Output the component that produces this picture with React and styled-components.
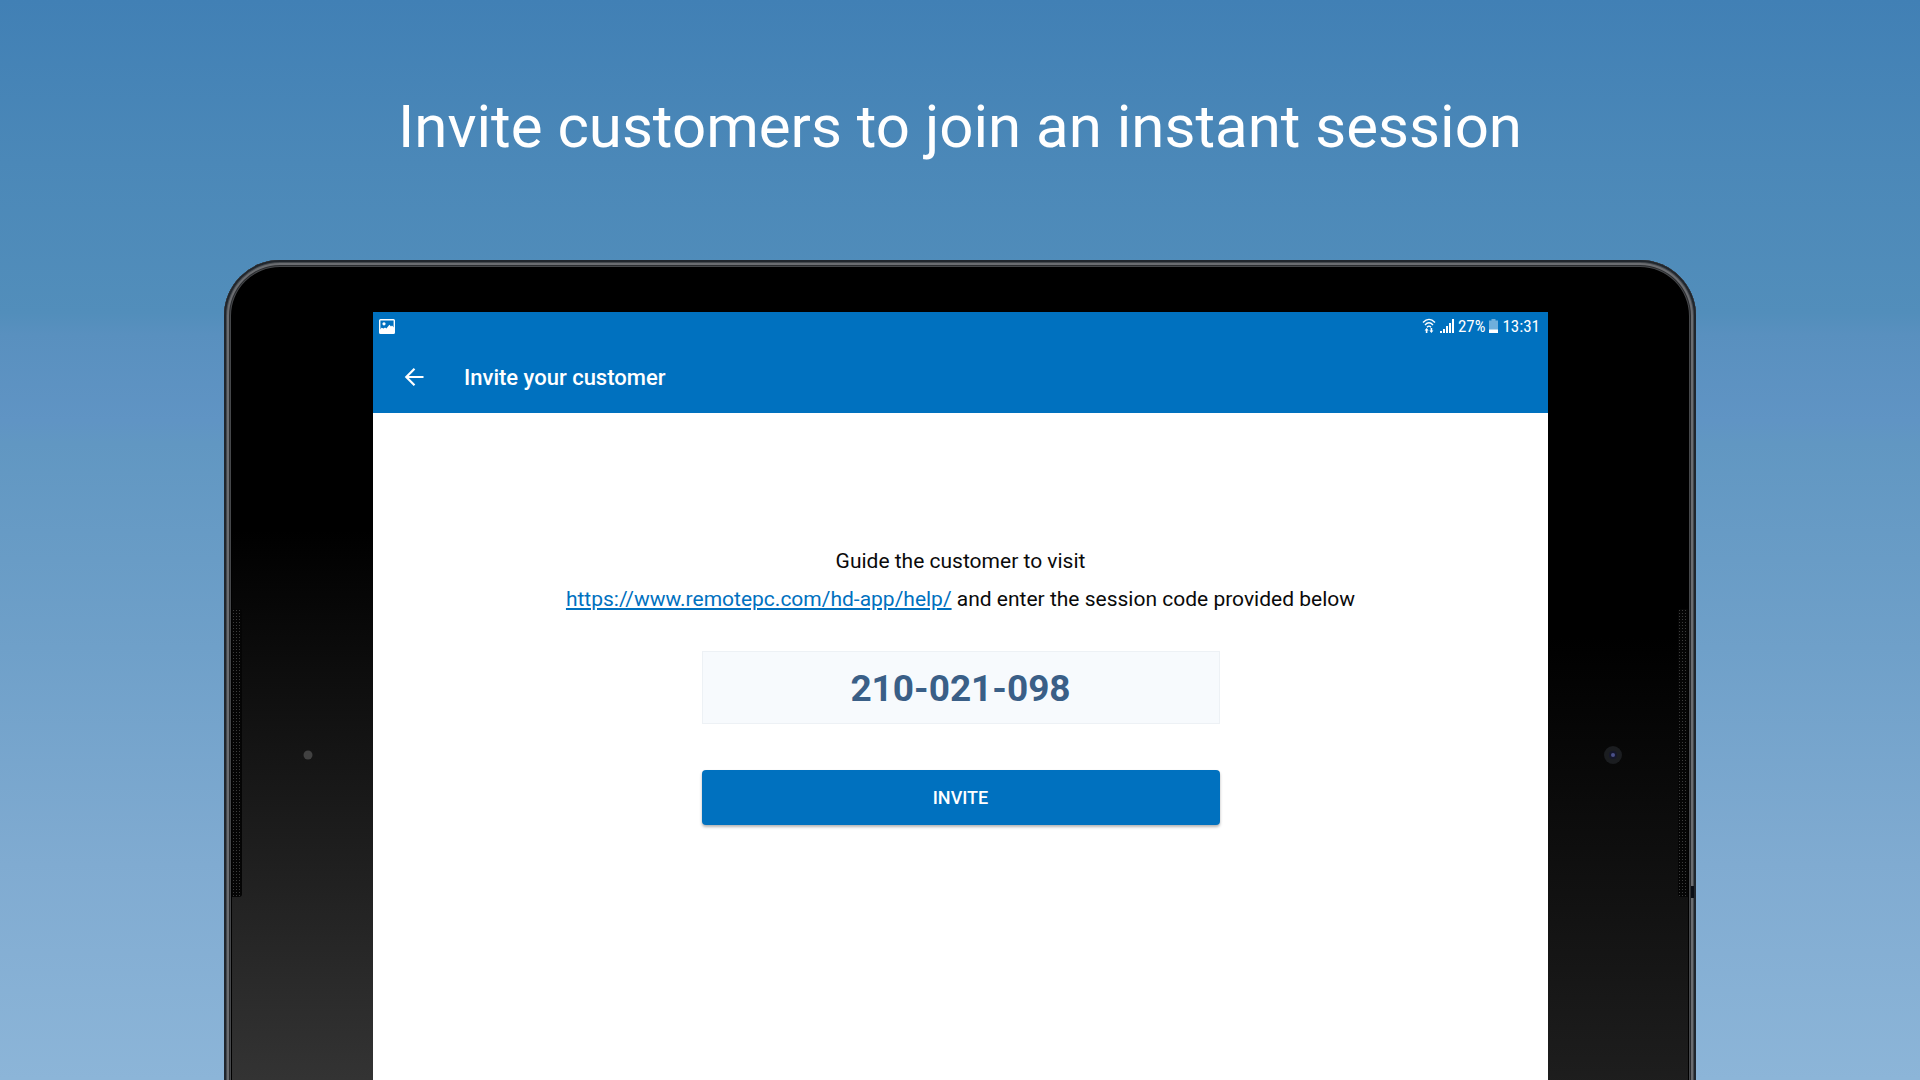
import React from 'react';
import styled, { createGlobalStyle } from 'styled-components';

const Global = createGlobalStyle`
  *, *::before, *::after { box-sizing: border-box; }
  body { margin: 0; font-family: Roboto, "Liberation Sans", sans-serif; }
`;

const Page = styled.main`
  display: flex;
  flex-direction: column;
  align-items: center;
  min-height: 100vh;
  overflow: hidden;
  background: linear-gradient(
    180deg,
    #4180b5 0%,
    #4b88b8 15%,
    #528ebb 29%,
    #5990bf 31%,
    #6094c4 39%,
    #6197c2 41%,
    #6fa0c9 60%,
    #80abd1 80%,
    #8cb5d8 100%
  );
`;

const Headline = styled.h1`
  margin: 0;
  padding: 91px 24px 97px;
  color: #fff;
  font-size: 60px;
  line-height: 72px;
  font-weight: 400;
  text-align: center;
`;

const Tablet = styled.section`
  position: relative;
  display: flex;
  flex: 1;
  width: calc(100% - 448px);
  min-width: 720px;
  margin-bottom: -8px;
  padding: 8px 8px 0;
  border-radius: 56px 56px 0 0;
  background: #000;
  box-shadow:
    inset 0 0 0 2px #20262d,
    inset 0 0 0 3px #44494e,
    inset 0 0 0 5px #6b6d71,
    inset 0 0 0 6px #2b2d30,
    inset 0 0 0 7px #45474a;
`;

const SideNotch = styled.span`
  position: absolute;
  top: 626px;
  right: 2px;
  width: 3px;
  height: 12px;
  background: #0a0e16;
`;

const Bezel = styled.div`
  display: flex;
  flex: 0 0 ${(p) => (p.$side === 'right' ? '140px' : '141px')};
  justify-content: space-between;
  flex-direction: ${(p) => (p.$side === 'right' ? 'row-reverse' : 'row')};
  border-radius: ${(p) => (p.$side === 'right' ? '0 48px 0 0' : '48px 0 0 0')};
  background: linear-gradient(180deg, #000 ${(p) => p.$from}, ${(p) => p.$tone} 100%);
`;

const Grille = styled.div`
  width: 10px;
  height: 288px;
  margin-top: 341px;
  border-radius: ${(p) => (p.$side === 'right' ? '3px 0 0 3px' : '0 3px 3px 0')};
  background-color: #050505;
  background-image: radial-gradient(circle, #3c3c3c 1px, transparent 1px);
  background-size: 3px 3px;
`;

const Lens = styled.svg`
  display: block;
  width: 18px;
  height: 18px;
  margin: 478px 56px 0;
`;

const Screen = styled.div`
  display: flex;
  flex: 1;
  flex-direction: column;
  margin-top: 44px;
  background: #fff;
`;

const StatusBar = styled.div`
  display: flex;
  align-items: center;
  justify-content: space-between;
  height: 28px;
  padding: 0 8px 0 6px;
  background: #0071bf;
  color: #fff;
  font-family: "Roboto Condensed", Roboto, sans-serif;
  font-size: 17px;
  line-height: 28px;
`;

const StatusGroup = styled.div`
  display: flex;
  align-items: center;
  gap: 4px;
`;

const Glyph = styled.svg`
  display: block;
  flex: none;
`;

const AppBar = styled.header`
  display: flex;
  align-items: center;
  gap: 35px;
  height: 73px;
  padding: 0 28px;
  background: #0071bf;
  color: #fff;
`;

const BackButton = styled.button`
  display: flex;
  padding: 0;
  border: 0;
  background: none;
  color: inherit;
  cursor: pointer;
`;

const Title = styled.h2`
  margin: 0;
  padding-top: 2px;
  font-size: 22px;
  line-height: 28px;
  font-weight: 500;
`;

const Content = styled.div`
  display: flex;
  flex-direction: column;
  align-items: center;
  padding: 129px 24px 0;
`;

const Guide = styled.p`
  margin: 0;
  color: #0a0a0a;
  font-size: 21px;
  line-height: 38px;
  text-align: center;
`;

const HelpLink = styled.a`
  color: #0071bf;
  text-decoration: underline;
`;

const SessionCode = styled.output`
  display: flex;
  align-items: center;
  justify-content: center;
  width: 518px;
  height: 73px;
  margin-top: 33px;
  padding-top: 3px;
  border: 1px solid #edf1f5;
  background: #f7fafd;
  color: #3a5f87;
  font-size: 37px;
  line-height: 44px;
  font-weight: 700;
`;

const InviteButton = styled.button`
  width: 518px;
  height: 55px;
  margin-top: 46px;
  border: 0;
  border-radius: 4px;
  background: #0071bf;
  box-shadow: 0 2px 3px rgba(0, 0, 0, 0.3);
  color: #fff;
  font-family: inherit;
  font-size: 18px;
  line-height: 24px;
  font-weight: 500;
  cursor: pointer;
`;

const PictureIcon = () => (
  <Glyph width="16" height="15" viewBox="0 0 16 15" aria-hidden="true">
    <rect x="0.7" y="0.7" width="14.6" height="13.6" rx="0.8" fill="#0071bf" stroke="#fff" strokeWidth="1.4" />
    <path d="M1 10.5L2.6 8.8L4.6 9.6L6 8.4L7.4 9.4L10.4 5.8L12 7.4L13 6.6L15 8.6V14H1Z" fill="#fff" />
    <circle cx="5" cy="4.8" r="1.6" fill="#fff" />
  </Glyph>
);

const WifiIcon = () => (
  <Glyph width="14" height="16" viewBox="0 0 14 16" aria-hidden="true">
    <g fill="none" stroke="#fff" strokeWidth="1.4">
      <path d="M1 4.6Q7-1.8 13 4.6" />
      <path d="M3 6.9Q7 2.6 11 6.9" />
      <path d="M5 9.2Q7 7 9 9.2" />
    </g>
    <path d="M4.6 10L6.6 12.6H5.4V15H3.8V12.6H2.6ZM9.4 15L7.4 12.4H8.6V10H10.2V12.4H11.4Z" fill="#fff" />
  </Glyph>
);

const SignalIcon = () => (
  <Glyph width="14" height="14" viewBox="0 0 14 14" aria-hidden="true">
    <path d="M0 12H2V14H0ZM3 10H5V14H3ZM6 7H8V14H6ZM9 4H11V14H9ZM12 0H14V14H12Z" fill="#fff" />
  </Glyph>
);

const BatteryIcon = () => (
  <Glyph width="9" height="14" viewBox="0 0 9 14" aria-hidden="true">
    <path d="M2.5 0H6.5V1.5H9V14H0V1.5H2.5Z" fill="#6fafdc" />
    <path d="M0 10.5H9V14H0Z" fill="#fff" />
  </Glyph>
);

const ArrowIcon = () => (
  <Glyph width="28" height="28" viewBox="0 0 28 28" aria-hidden="true">
    <path d="M22.5 14H5.5M13.5 5.8L5.3 14L13.5 22.2" fill="none" stroke="#fff" strokeWidth="2.2" />
  </Glyph>
);

export default function App() {
  return (
    <>
      <Global />
      <Page>
        <Headline>Invite customers to join an instant session</Headline>
        <Tablet>
          <Bezel $side="left" $from="32%" $tone="#343434">
            <Grille $side="left" />
            <Lens viewBox="0 0 18 18" aria-hidden="true">
              <circle cx="9" cy="9" r="4.5" fill="#414141" />
            </Lens>
          </Bezel>
          <Screen>
            <StatusBar>
              <PictureIcon />
              <StatusGroup>
                <WifiIcon />
                <SignalIcon />
                <span>27%</span>
                <BatteryIcon />
                <span>13:31</span>
              </StatusGroup>
            </StatusBar>
            <AppBar>
              <BackButton type="button" aria-label="Back">
                <ArrowIcon />
              </BackButton>
              <Title>Invite your customer</Title>
            </AppBar>
            <Content>
              <Guide>
                Guide the customer to visit
                <br />
                <HelpLink href="https://www.remotepc.com/hd-app/help/">
                  https://www.remotepc.com/hd-app/help/
                </HelpLink>{' '}
                and enter the session code provided below
              </Guide>
              <SessionCode>210-021-098</SessionCode>
              <InviteButton type="button">INVITE</InviteButton>
            </Content>
          </Screen>
          <Bezel $side="right" $from="45%" $tone="#1e1e1e">
            <Grille $side="right" />
            <Lens viewBox="0 0 18 18" aria-hidden="true">
              <circle cx="9" cy="9" r="9" fill="#1b1d20" />
              <circle cx="9" cy="9" r="4" fill="#15172b" />
              <circle cx="9" cy="9" r="2" fill="#4a5088" />
            </Lens>
          </Bezel>
          <SideNotch />
        </Tablet>
      </Page>
    </>
  );
}
